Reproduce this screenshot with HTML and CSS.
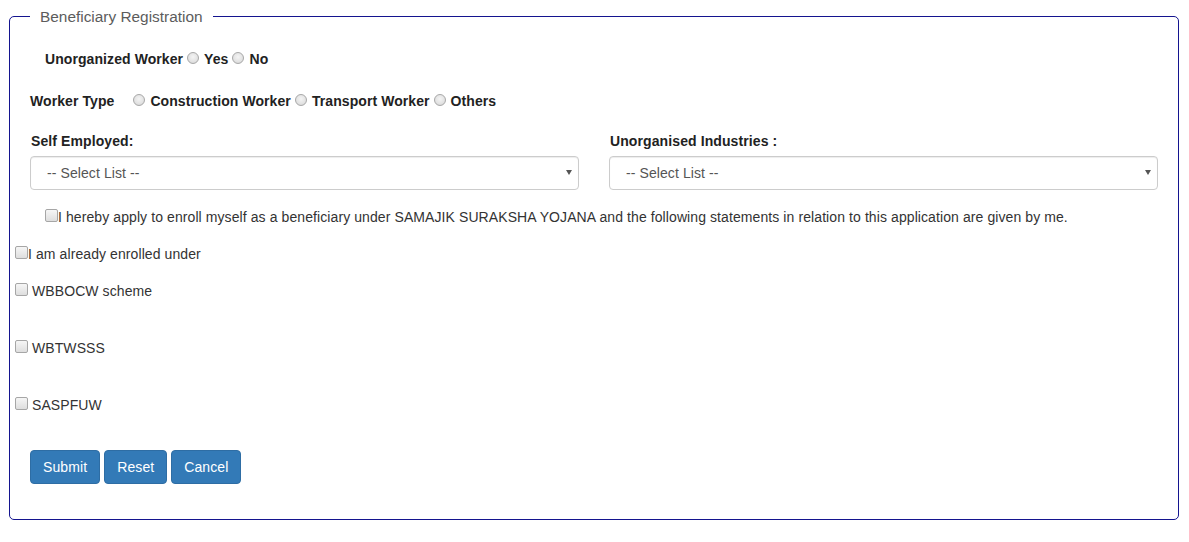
FILE: index.html
```html
<!DOCTYPE html>
<html lang="en">
<head>
<meta charset="utf-8">
<title>Beneficiary Registration</title>
<link rel="stylesheet" href="styles.css">
</head>
<body>
<div class="page">
  <fieldset class="panel">
    <legend class="panel-title">Beneficiary Registration</legend>

    <div class="row row-uw">
      <span class="lbl">Unorganized Worker</span>
      <input type="radio" name="uw" class="radio">
      <span class="lbl">Yes</span>
      <input type="radio" name="uw" class="radio">
      <span class="lbl">No</span>
    </div>

    <div class="row row-wt">
      <span class="lbl lbl-wt">Worker Type</span>
      <input type="radio" name="wt" class="radio">
      <span class="lbl">Construction Worker</span>
      <input type="radio" name="wt" class="radio">
      <span class="lbl">Transport Worker</span>
      <input type="radio" name="wt" class="radio">
      <span class="lbl">Others</span>
    </div>

    <div class="selects">
      <div class="field">
        <label class="field-label">Self Employed:</label>
        <div class="select-wrap">
          <select class="select"><option>-- Select List --</option></select>
        </div>
      </div>
      <div class="field">
        <label class="field-label">Unorganised Industries :</label>
        <div class="select-wrap">
          <select class="select"><option>-- Select List --</option></select>
        </div>
      </div>
    </div>

    <div class="row row-consent">
      <input type="checkbox" class="check">
      <span>I hereby apply to enroll myself as a beneficiary under SAMAJIK SURAKSHA YOJANA and the following statements in relation to this application are given by me.</span>
    </div>

    <div class="row row-enrolled">
      <input type="checkbox" class="check">
      <span>I am already enrolled under</span>
    </div>

    <div class="row row-scheme row-first">
      <input type="checkbox" class="check">
      <span class="scheme-text">WBBOCW scheme</span>
    </div>
    <div class="row row-scheme">
      <input type="checkbox" class="check">
      <span class="scheme-text">WBTWSSS</span>
    </div>
    <div class="row row-scheme">
      <input type="checkbox" class="check">
      <span class="scheme-text">SASPFUW</span>
    </div>

    <div class="buttons">
      <button class="btn" type="button">Submit</button>
      <button class="btn" type="button">Reset</button>
      <button class="btn" type="button">Cancel</button>
    </div>
  </fieldset>
</div>
</body>
</html>
```

FILE: styles.css
```css
* { box-sizing: border-box; }

html, body {
  margin: 0;
  padding: 0;
  background: #ffffff;
}

body {
  font-family: "Liberation Sans", Arial, sans-serif;
  font-size: 14px;
  letter-spacing: 0.09px;
  color: #333333;
}

.page {
  padding: 6px 10px 0 9px;
}

.panel {
  margin: 0;
  padding: 0 0 35px 0;
  border: 1px solid #14148f;
  border-radius: 5px;
  min-width: 0;
}

.panel-title {
  margin-left: 20px;
  padding: 0 10px;
  font-size: 15.4px;
  letter-spacing: 0;
  line-height: 21px;
  color: #5c5c5c;
}

.row {
  display: flex;
  align-items: center;
  line-height: 20px;
  white-space: nowrap;
}

.lbl {
  font-weight: bold;
  color: #222222;
  letter-spacing: 0.08px;
}

.radio {
  appearance: none;
  -webkit-appearance: none;
  width: 12px;
  height: 12px;
  margin: 0 5px 3px 4px;
  border-radius: 50%;
  border: 1px solid #a8a8a8;
  background: radial-gradient(circle at 50% 40%, #f4f4f4 0%, #e2e2e2 60%, #cfcfcf 100%);
  flex: none;
}

.row-uw {
  margin-top: 22px;
  padding-left: 35px;
}

.row-wt {
  margin-top: 22px;
  padding-left: 20px;
}

.lbl-wt {
  margin-right: 15px;
}

.selects {
  display: grid;
  grid-template-columns: 1fr 1fr;
  column-gap: 30px;
  margin-top: 20px;
  padding: 0 20px 0 20px;
}

.field-label {
  display: block;
  font-weight: bold;
  color: #222222;
  letter-spacing: 0.1px;
  line-height: 20px;
  padding-left: 1px;
  margin-bottom: 5px;
}

.select-wrap {
  position: relative;
}

.select-wrap::after {
  content: "";
  position: absolute;
  right: 7px;
  top: 14px;
  border-left: 3px solid transparent;
  border-right: 3px solid transparent;
  border-top: 5px solid #555555;
  pointer-events: none;
}

.select {
  appearance: none;
  -webkit-appearance: none;
  display: block;
  width: 100%;
  height: 34px;
  padding: 6px 12px 6px 16px;
  font-family: "Liberation Sans", Arial, sans-serif;
  font-size: 14px;
  letter-spacing: 0.09px;
  line-height: 20px;
  color: #555555;
  background: #ffffff;
  border: 1px solid #cccccc;
  border-radius: 4px;
  box-shadow: inset 0 1px 1px rgba(0, 0, 0, 0.075);
}

.check {
  appearance: none;
  -webkit-appearance: none;
  width: 13px;
  height: 13px;
  margin: 0 0 4px 0;
  border: 1px solid #a6a6a6;
  border-radius: 2px;
  background: linear-gradient(#f6f6f6, #dedede);
  flex: none;
}

.row-consent {
  margin-top: 17px;
  padding-left: 35px;
}

.row-enrolled {
  margin-top: 17px;
  padding-left: 5px;
}

.row-scheme {
  margin-top: 37px;
  padding-left: 5px;
}

.row-scheme.row-first {
  margin-top: 17px;
}

.scheme-text {
  margin-left: 4px;
}

.buttons {
  display: flex;
  gap: 4px;
  margin-top: 35px;
  padding-left: 20px;
}

.btn {
  font-family: "Liberation Sans", Arial, sans-serif;
  font-size: 14px;
  letter-spacing: 0.1px;
  line-height: 20px;
  padding: 6px 12px;
  color: #ffffff;
  background: #337ab7;
  border: 1px solid #2e6da4;
  border-radius: 4px;
}
```
